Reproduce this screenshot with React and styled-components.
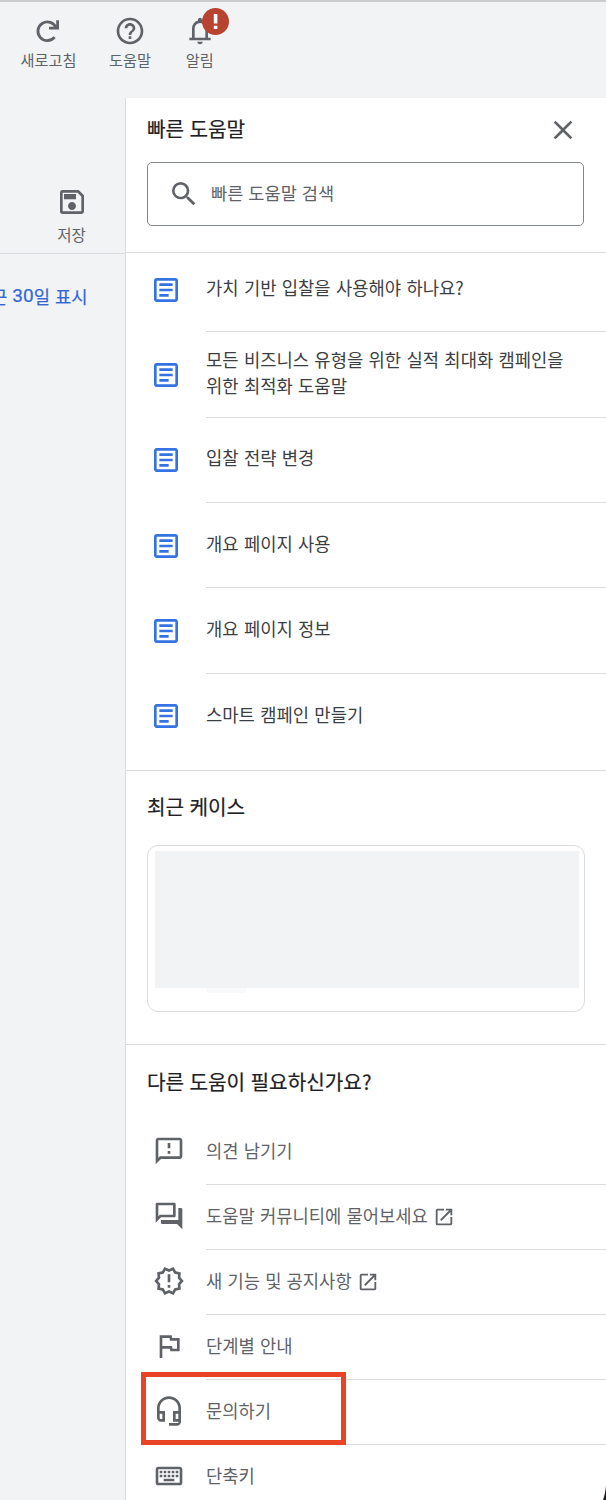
import React from 'react';
import styled, { createGlobalStyle, css } from 'styled-components';
import {
  MdHelpOutline,
  MdOutlineSave,
  MdSearch,
  MdClose,
  MdOutlineArticle,
  MdOutlineFeedback,
  MdOutlineQuestionAnswer,
  MdOutlineNewReleases,
  MdOutlineFlag,
  MdOutlineHeadsetMic,
  MdOutlineKeyboard,
  MdOpenInNew,
} from 'react-icons/md';

const GlobalStyle = createGlobalStyle`
  * { box-sizing: border-box; }
  body {
    margin: 0;
    background: #f1f3f4;
    font-family: "Noto Sans CJK KR", sans-serif;
    color: #3c4043;
  }
  svg { display: block; flex: none; }
`;

const Page = styled.div`
  position: relative;
  width: 606px;
  height: 1500px;
  overflow: hidden;
  display: flex;
  flex-direction: column;
  background: #f1f3f4;
  border-top: 2px solid #cbcccd;
`;

const Toolbar = styled.header`
  height: 96px;
  flex: none;
  display: flex;
  align-items: flex-start;
  gap: 32.7px;
  padding: 13px 0 0 20.5px;
`;

const Tool = styled.button`
  border: 0;
  padding: 0;
  background: none;
  display: flex;
  flex-direction: column;
  align-items: center;
  color: #5f6368;
  font: 400 ${(p) => p.$size || 15.2}px/${(p) => p.$line || 25}px "Noto Sans CJK KR", sans-serif;
  white-space: nowrap;
`;

const BellWrap = styled.span`
  position: relative;
`;

const Badge = styled.span`
  position: absolute;
  left: 18px;
  top: -7.5px;
  width: 27px;
  height: 27px;
  border-radius: 50%;
  background: #b94331;
`;

const Body = styled.div`
  flex: 1;
  display: flex;
  min-height: 0;
`;

const Side = styled.aside`
  width: 125px;
  flex: none;
`;

const SaveArea = styled.div`
  height: 156px;
  border-bottom: 1px solid #dadce0;
  padding: 88px 0 0 18px;
  display: flex;
  justify-content: center;
`;

const RangeLink = styled.a`
  display: flex;
  justify-content: flex-end;
  padding: 28px 37.5px 0 0;
  color: #3367d6;
  font-size: 17.7px;
  line-height: 28px;
  word-spacing: 1px;
  white-space: pre;
  -webkit-text-stroke: 0.2px currentColor;
`;

const Digits = styled.span`
  font-family: Roboto, "Noto Sans CJK KR", sans-serif;
  font-size: 19px;
`;

const Panel = styled.main`
  flex: 1;
  min-width: 0;
  background: #fff;
  border-left: 1px solid #dadce0;
`;

const Section = styled.section`
  height: ${(p) => p.$height}px;
  ${(p) => !p.$last && css`border-bottom: 1px solid #dadce0;`}
`;

const TitleRow = styled.div`
  height: 64px;
  padding: 0 27px 0 21px;
  display: flex;
  align-items: center;
  justify-content: space-between;
  color: #5f6368;
`;

const Title = styled.h2`
  margin: 0;
  color: #202124;
  font-size: 20.2px;
  font-weight: 400;
  line-height: 28px;
  word-spacing: 0.8px;
  -webkit-text-stroke: 0.2px currentColor;
  ${(p) => p.$inset && css`padding: ${p.$inset}px 0 0 21px;`}
  ${TitleRow} & { padding-bottom: 2px; }
`;

const SearchBox = styled.div`
  width: 437px;
  height: 64px;
  margin-left: 21px;
  padding-left: 20px;
  border: 1px solid #80868b;
  border-radius: 5px;
  display: flex;
  align-items: center;
  gap: 11px;
  color: #5f6368;
`;

const SearchText = styled.span`
  font-size: 17.6px;
  line-height: 26px;
  word-spacing: 1px;
  padding-bottom: 2px;
`;

const ArticleRow = styled.div`
  height: 85.33px;
  display: flex;
  padding-left: 24px;
  color: #3572e2;
  &:first-child { height: 79.4px; }
`;

const ArticleIcon = styled.span`
  width: 56px;
  display: flex;
  align-items: center;
  ${ArticleRow}:first-child & { padding-bottom: 6px; }
`;

const ArticleText = styled.span`
  flex: 1;
  display: flex;
  align-items: center;
  padding: 0 40px 5.2px 0;
  border-bottom: 1px solid #dadce0;
  color: #3c4043;
  font-size: 17.7px;
  line-height: 26px;
  word-spacing: 1.4px;
  word-break: keep-all;
  ${ArticleRow}:first-child & { padding-bottom: 11px; }
  ${ArticleRow}:last-child & { border-bottom: 0; }
`;

const CaseCard = styled.div`
  width: 438px;
  height: 167px;
  margin: 24px 0 0 21px;
  padding: 5px 5px 0 7px;
  border: 1px solid #dadce0;
  border-radius: 11px;
`;

const CaseCover = styled.div`
  height: 137px;
  background: #f1f3f4;
`;

const CaseChip = styled.div`
  width: 39px;
  height: 5px;
  margin-left: 52px;
  border-radius: 0 0 2px 2px;
  background: #f8f9fa;
`;

const HelpList = styled.div`
  padding-top: 24px;
`;

const HelpRow = styled.div`
  position: relative;
  height: 65px;
  display: flex;
  align-items: center;
  padding-left: 27px;
  color: #5f6368;
`;

const HelpIcon = styled.span`
  width: 53px;
  padding-bottom: 3px;
`;

const HelpText = styled.span`
  flex: 1;
  height: 65px;
  display: flex;
  align-items: center;
  gap: 5.5px;
  padding-bottom: 4px;
  border-bottom: 1px solid #dadce0;
  font-size: 17.7px;
  line-height: 26px;
  word-spacing: 1.2px;
`;

const ExternalIcon = styled(MdOpenInNew)`
  margin-top: 4px;
`;

const Highlight = styled.span`
  position: absolute;
  left: 14.5px;
  top: -8px;
  width: 205px;
  height: 73px;
  border: 5px solid #ea4427;
`;

const CornerMark = styled.svg`
  position: absolute;
  right: 0;
  bottom: 0;
`;

const RefreshIcon = () => (
  <svg width="32" height="32" viewBox="0 0 32 32" fill="none" stroke="currentColor" strokeWidth="2.8">
    <path d="M22.6 22.2A9.4 9.4 0 1 1 24.1 12.9" />
    <path d="M25.6 5.2V13.2H17" />
  </svg>
);

const BellIcon = () => (
  <svg width="32" height="32" viewBox="0 -960 960 960" fill="currentColor">
    <path d="M160-200v-80h80v-280q0-83 50-147.500T420-792v-28q0-25 17.500-42.500T480-880q25 0 42.500 17.500T540-820v28q80 20 130 84.500T720-560v280h80v80H160Zm320 120q-33 0-56.500-23.500T400-160h160q0 33-23.500 56.500T480-80ZM320-280h320v-280q0-66-47-113t-113-47q-66 0-113 47t-47 113v280Z" />
  </svg>
);

const articles = [
  '가치 기반 입찰을 사용해야 하나요?',
  '모든 비즈니스 유형을 위한 실적 최대화 캠페인을 위한 최적화 도움말',
  '입찰 전략 변경',
  '개요 페이지 사용',
  '개요 페이지 정보',
  '스마트 캠페인 만들기',
];

const helpItems = [
  { icon: MdOutlineFeedback, label: '의견 남기기' },
  { icon: MdOutlineQuestionAnswer, label: '도움말 커뮤니티에 물어보세요', external: true },
  { icon: MdOutlineNewReleases, label: '새 기능 및 공지사항', external: true },
  { icon: MdOutlineFlag, label: '단계별 안내' },
  { icon: MdOutlineHeadsetMic, label: '문의하기', highlighted: true },
  { icon: MdOutlineKeyboard, label: '단축키' },
];

export default function App() {
  return (
    <Page>
      <GlobalStyle />
      <Toolbar>
        <Tool><RefreshIcon />새로고침</Tool>
        <Tool><MdHelpOutline size={32} />도움말</Tool>
        <Tool>
          <BellWrap>
            <BellIcon />
            <Badge>
              <svg width="27" height="27" viewBox="0 0 27 27" fill="#fff">
                <path d="M11.800 6h3.600v9.500h-3.600zM11.800 17.700h3.600v3.200h-3.600z" />
              </svg>
            </Badge>
          </BellWrap>
          알림
        </Tool>
      </Toolbar>
      <Body>
        <Side>
          <SaveArea>
            <Tool $size={15.6} $line={32}><MdOutlineSave size={32} />저장</Tool>
          </SaveArea>
          <RangeLink>근 <Digits>30</Digits>일 표시</RangeLink>
        </Side>
        <Panel>
          <Section $height={155}>
            <TitleRow>
              <Title>빠른 도움말</Title>
              <MdClose size={32} />
            </TitleRow>
            <SearchBox>
              <MdSearch size={32} />
              <SearchText>빠른 도움말 검색</SearchText>
            </SearchBox>
          </Section>
          <Section $height={518}>
            {articles.map((text) => (
              <ArticleRow key={text}>
                <ArticleIcon><MdOutlineArticle size={32} /></ArticleIcon>
                <ArticleText>{text}</ArticleText>
              </ArticleRow>
            ))}
          </Section>
          <Section $height={274}>
            <Title $inset={22}>최근 케이스</Title>
            <CaseCard>
              <CaseCover />
              <CaseChip />
            </CaseCard>
          </Section>
          <Section $height={455} $last>
            <Title $inset={23}>다른 도움이 필요하신가요?</Title>
            <HelpList>
              {helpItems.map(({ icon: Icon, label, external, highlighted }) => (
                <HelpRow key={label}>
                  <HelpIcon><Icon size={32} /></HelpIcon>
                  <HelpText>
                    {label}
                    {external && <ExternalIcon size={22} />}
                  </HelpText>
                  {highlighted && <Highlight />}
                </HelpRow>
              ))}
            </HelpList>
          </Section>
        </Panel>
      </Body>
      <CornerMark width="3" height="14" viewBox="0 0 3 14">
        <path d="M3 0V14H0Q2 9 3 0Z" fill="#201a1c" />
      </CornerMark>
    </Page>
  );
}
